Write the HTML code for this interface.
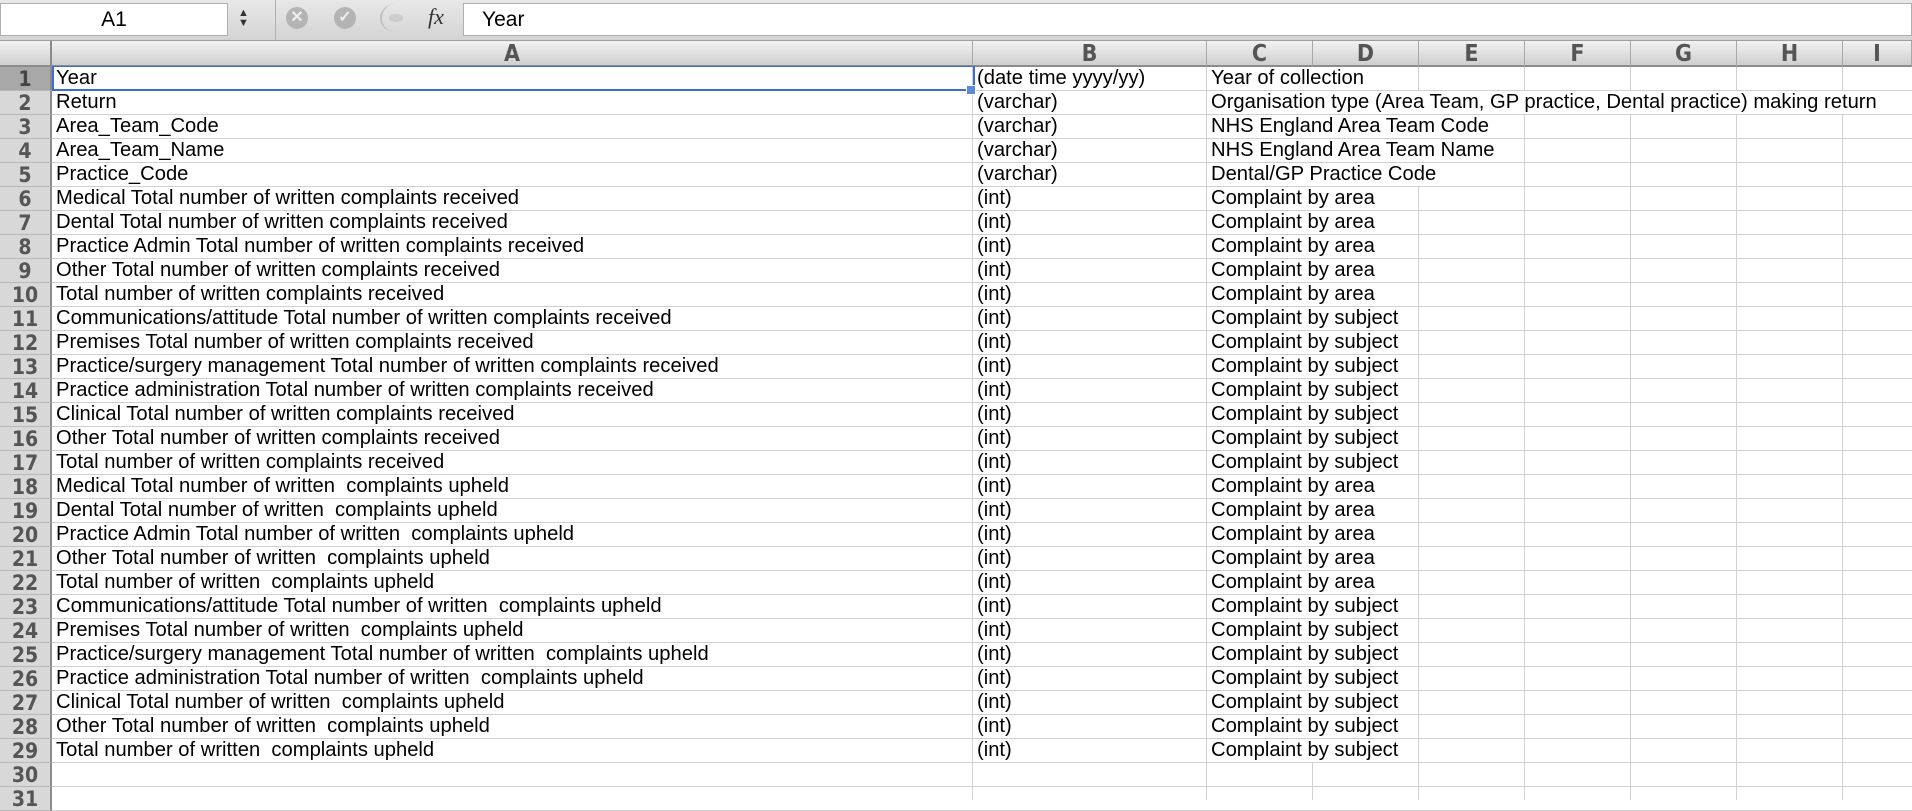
<!DOCTYPE html><html><head><style>
body{margin:0;width:1912px;height:800px;overflow:hidden;background:#fff;font-family:"Liberation Sans",sans-serif;position:relative}
.tb{position:absolute;left:0;top:0;width:1912px;height:40px;background:linear-gradient(#e8e8e8,#d4d4d4);border-bottom:1px solid #a0a0a0}
.nb{position:absolute;left:0;top:3px;width:226px;height:31px;background:#fff;border:1px solid #b0b0b0;font-size:21px;line-height:31px;text-align:center}
.fb{position:absolute;left:463px;top:3px;right:0;height:31px;background:#fff;border:1px solid #b0b0b0;font-size:21px;line-height:31px;padding-left:18px}
.ic{position:absolute;top:7px;width:22px;height:22px;border-radius:50%;background:#b4b4b4;color:#eee;font-size:16px;line-height:22px;text-align:center;font-weight:bold}
.hdr{position:absolute;top:41px;height:26px;background:linear-gradient(#f2f2f2,#cfcfcf);border-right:1px solid #a8a8a8;border-bottom:2px solid #8c8c8c;box-sizing:border-box;text-align:center;font-weight:bold;color:#555;font-size:23px;line-height:26px;font-family:"DejaVu Sans Condensed","Liberation Sans",sans-serif}
.rh{position:absolute;left:0;width:52px;height:24px;background:#d8d8d8;border-bottom:1px solid #b8b8b8;border-right:2px solid #8c8c8c;box-sizing:border-box;text-align:center;font-weight:bold;color:#555;font-size:21px;line-height:24px;font-family:"DejaVu Sans Condensed","Liberation Sans",sans-serif}
.row{position:absolute;left:52px;width:1860px;height:24px;border-bottom:1px solid #d0d0d0;box-sizing:border-box;font-size:20.2px;line-height:23px}
.row span{position:absolute;top:0;height:23px;white-space:nowrap;background:#fff;padding-right:3px}
.vl{position:absolute;top:67px;bottom:0;width:1px;background:#d0d0d0}
</style></head><body>
<div class="tb">
<div class="nb">A1</div>
<div style="position:absolute;left:238px;top:8px;font-size:11px;line-height:10px;color:#333">▲<br>▼</div>
<div style="position:absolute;left:275px;top:0;width:1px;height:40px;background:#b0b0b0"></div>
<div class="ic" style="left:286px">✕</div>
<div class="ic" style="left:334px">✓</div>
<div style="position:absolute;left:380px;top:4px;width:28px;height:28px;border-radius:50%;border-left:2px solid #c0c0c0"></div>
<div class="ic" style="left:389px;width:14px;height:8px;top:14px;background:#ccc"></div>
<div style="position:absolute;left:428px;top:4px;font-family:'Liberation Serif',serif;font-style:italic;font-size:22px;color:#333">fx</div>
<div class="fb">Year</div>
</div>
<div class="hdr" style="left:0;width:52px;border-right:2px solid #8c8c8c"></div>
<div class="hdr" style="left:52px;width:921px">A</div>
<div class="hdr" style="left:973px;width:234px">B</div>
<div class="hdr" style="left:1207px;width:106px">C</div>
<div class="hdr" style="left:1313px;width:106px">D</div>
<div class="hdr" style="left:1419px;width:106px">E</div>
<div class="hdr" style="left:1525px;width:106px">F</div>
<div class="hdr" style="left:1631px;width:106px">G</div>
<div class="hdr" style="left:1737px;width:106px">H</div>
<div class="hdr" style="left:1843px;width:69px">I</div>
<div class="vl" style="left:972px"></div><div class="vl" style="left:1206px"></div>
<div class="vl" style="left:1312px"></div><div class="vl" style="left:1418px"></div><div class="vl" style="left:1524px"></div><div class="vl" style="left:1630px"></div><div class="vl" style="left:1736px"></div><div class="vl" style="left:1842px"></div>
<div id="g"></div>
<script>
var A=["Year","Return","Area_Team_Code","Area_Team_Name","Practice_Code","Medical Total number of written complaints received","Dental Total number of written complaints received","Practice Admin Total number of written complaints received","Other Total number of written complaints received","Total number of written complaints received","Communications/attitude Total number of written complaints received","Premises Total number of written complaints received","Practice/surgery management Total number of written complaints received","Practice administration Total number of written complaints received","Clinical Total number of written complaints received","Other Total number of written complaints received","Total number of written complaints received","Medical Total number of written&nbsp; complaints upheld","Dental Total number of written&nbsp; complaints upheld","Practice Admin Total number of written&nbsp; complaints upheld","Other Total number of written&nbsp; complaints upheld","Total number of written&nbsp; complaints upheld","Communications/attitude Total number of written&nbsp; complaints upheld","Premises Total number of written&nbsp; complaints upheld","Practice/surgery management Total number of written&nbsp; complaints upheld","Practice administration Total number of written&nbsp; complaints upheld","Clinical Total number of written&nbsp; complaints upheld","Other Total number of written&nbsp; complaints upheld","Total number of written&nbsp; complaints upheld","",""];
var B=["(date time yyyy/yy)","(varchar)","(varchar)","(varchar)","(varchar)"];
var C=["Year of collection","Organisation type (Area Team, GP practice, Dental practice) making return","NHS England Area Team Code","NHS England Area Team Name","Dental/GP Practice Code"];
var s="";
for(var i=0;i<31;i++){var y=67+i*24;var b=i<5?B[i]:(i<29?"(int)":"");var c=i<5?C[i]:(i<29?((i<10||(i>=17&&i<22))?"Complaint by area":"Complaint by subject"):"");
var bg=i==0?"background:#a8a8a8;color:#444;":"";
s+='<div class="rh" style="top:'+y+'px;'+bg+'">'+(i+1)+'</div>';
s+='<div class="row" style="top:'+y+'px;"><span style="left:4px">'+A[i]+'</span>'+(b?'<span style="left:925px">'+b+'</span>':'')+(c?'<span style="left:1159px">'+c+'</span>':'')+'</div>';}
document.getElementById("g").innerHTML=s;
</script>
<div style="position:absolute;left:52px;top:66px;width:919px;height:22px;border:2px solid #3a6fd0;border-top-width:1px;box-sizing:content-box"></div>
<div style="position:absolute;left:966px;top:85px;width:8px;height:8px;background:#5a8ad8;border:1px solid #fff"></div>
</body></html>
